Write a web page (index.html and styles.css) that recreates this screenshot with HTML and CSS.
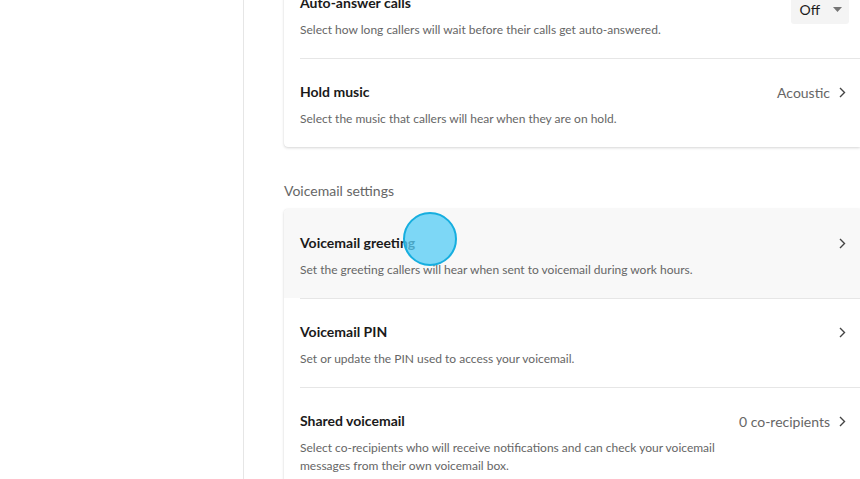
FILE: index.html
```html
<!DOCTYPE html>
<html>
<head>
<meta charset="utf-8">
<link rel="stylesheet" href="styles.css">
</head>
<body>
<div class="layout">
  <aside class="sidebar"></aside>
  <main class="main">
    <div class="content">
      <section class="card">
        <div class="row">
          <div class="text">
            <div class="title">Auto-answer calls</div>
            <div class="desc">Select how long callers will wait before their calls get auto-answered.</div>
          </div>
          <div class="select">
            <span>Off</span>
            <svg class="caret" width="9" height="5" viewBox="0 0 9 5"><path d="M0 0h9L4.5 5z" fill="#757575"/></svg>
          </div>
        </div>
        <div class="row">
          <div class="text">
            <div class="title">Hold music</div>
            <div class="desc">Select the music that callers will hear when they are on hold.</div>
          </div>
          <div class="value"><span>Acoustic</span><svg class="chev" width="7" height="11" viewBox="0 0 7 11"><path d="M1 1l4.5 4.5L1 10" fill="none" stroke="#444" stroke-width="1.4"/></svg></div>
        </div>
      </section>

      <h2 class="section-label">Voicemail settings</h2>

      <section class="card">
        <div class="row hover">
          <div class="text">
            <div class="title">Voicemail greeting</div>
            <div class="desc">Set the greeting callers will hear when sent to voicemail during work hours.</div>
          </div>
          <div class="value"><svg class="chev" width="7" height="11" viewBox="0 0 7 11"><path d="M1 1l4.5 4.5L1 10" fill="none" stroke="#444" stroke-width="1.4"/></svg></div>
          <div class="cursor"></div>
        </div>
        <div class="row">
          <div class="text">
            <div class="title">Voicemail PIN</div>
            <div class="desc">Set or update the PIN used to access your voicemail.</div>
          </div>
          <div class="value"><svg class="chev" width="7" height="11" viewBox="0 0 7 11"><path d="M1 1l4.5 4.5L1 10" fill="none" stroke="#444" stroke-width="1.4"/></svg></div>
        </div>
        <div class="row">
          <div class="text narrow">
            <div class="title">Shared voicemail</div>
            <div class="desc">Select co-recipients who will receive notifications and can check your voicemail messages from their own voicemail box.</div>
          </div>
          <div class="value"><span>0 co-recipients</span><svg class="chev" width="7" height="11" viewBox="0 0 7 11"><path d="M1 1l4.5 4.5L1 10" fill="none" stroke="#444" stroke-width="1.4"/></svg></div>
        </div>
      </section>
    </div>
  </main>
</div>
</body>
</html>
```

FILE: styles.css
```css
* { box-sizing: border-box; }
html, body {
  margin: 0;
  padding: 0;
  width: 860px;
  height: 479px;
  overflow: hidden;
  background: #fff;
  font-family: Lato, "Open Sans", sans-serif;
  color: #1a1a1a;
}
.layout {
  display: flex;
  height: 479px;
}
.sidebar {
  width: 244px;
  flex: none;
  border-right: 1px solid #e6e6e6;
}
.main {
  flex: 1;
  min-width: 0;
  overflow: hidden;
  padding-left: 40px;
}
.content {
  margin-top: -31px;
}
.card {
  background: #fff;
  border-radius: 4px 0 0 4px;
  box-shadow: 0 1px 3px rgba(0,0,0,0.16), 0 0 1px rgba(0,0,0,0.10);
  overflow: hidden;
}
.row {
  position: relative;
  display: flex;
  align-items: flex-start;
  padding: 24px 14px 19px 16px;
}
.row + .row::before {
  content: "";
  position: absolute;
  top: 0;
  left: 16px;
  right: 0;
  border-top: 1px solid #e6e6e6;
}
.row.hover { background: #f8f8f8; }
.text { flex: 1; }
.text.narrow { max-width: 425px; }
.title {
  font-size: 14px;
  font-weight: 700;
  line-height: 20px;
  color: #1a1a1a;
}
.desc {
  margin-top: 8px;
  font-size: 12px;
  line-height: 18px;
  color: #666;
}
.value {
  display: flex;
  align-items: center;
  gap: 9px;
  height: 20px;
  margin-left: auto;
  font-size: 14px;
  color: #666;
}
.chev { display: block; }
.select {
  display: flex;
  align-items: center;
  gap: 13px;
  margin-top: -9px;
  margin-right: -3px;
  height: 40px;
  padding: 10px 7px 0 9px;
  background: #f4f4f4;
  border-radius: 3px;
  font-size: 14px;
  color: #1a1a1a;
}
.caret { display: block; }
.section-label {
  margin: 35px 0 9px;
  font-size: 14px;
  font-weight: 400;
  line-height: 18px;
  color: #666;
}
.cursor {
  position: absolute;
  left: 119px;
  top: 3px;
  width: 54px;
  height: 54px;
  border-radius: 50%;
  background: rgba(90, 205, 245, 0.78);
  border: 2px solid #16aedf;
}
```
